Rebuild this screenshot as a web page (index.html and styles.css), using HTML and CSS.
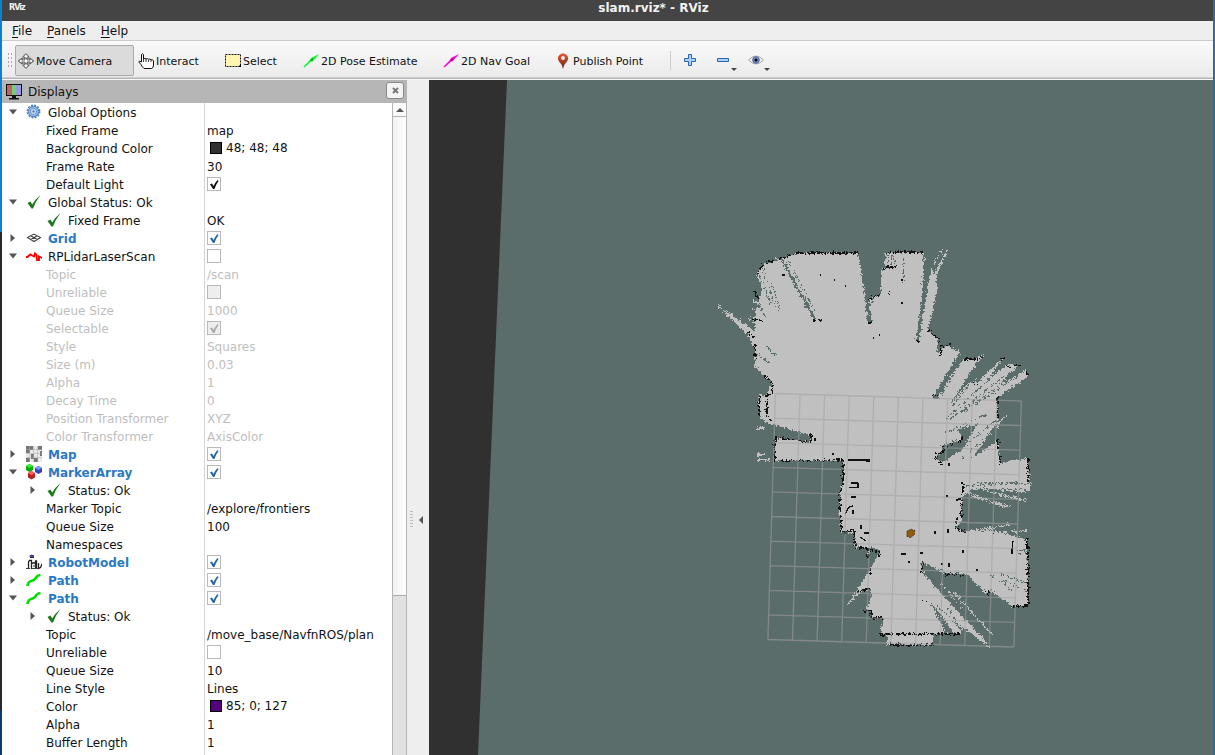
FILE: index.html
```
<!DOCTYPE html>
<html lang="en">
<head>
<meta charset="utf-8">
<title>slam.rviz* - RViz</title>
<link rel="stylesheet" href="styles.css">
</head>
<body>
<svg class="defs" aria-hidden="true">
  <defs>
    <linearGradient id="pin" x1="0" y1="0" x2="0" y2="1"><stop offset="0" stop-color="#ee5a36"/><stop offset="1" stop-color="#5c2414"/></linearGradient>
    <filter id="rough" filterUnits="userSpaceOnUse" x="700" y="235" width="345" height="425" color-interpolation-filters="sRGB"><feTurbulence type="fractalNoise" baseFrequency=".45" numOctaves="2" seed="7"/><feDisplacementMap in="SourceGraphic" scale="6" xChannelSelector="R" yChannelSelector="G"/></filter>
    <symbol id="down" viewBox="0 0 8 5"><path d="M0 0h8L4 5z" fill="#555"/></symbol>
    <symbol id="right" viewBox="0 0 5 8"><path d="M0 0v8L4.500 4z" fill="#555"/></symbol>
    <symbol id="tick" viewBox="0 0 16 16"><path d="M1.500 9L4.500 7.500l1.700 3Q9 5.500 14.500 1 9.500 7.500 7 14.500H5.500z" fill="#1c7a1c"/></symbol>
    <symbol id="path" viewBox="0 0 16 16"><path d="M1.500 14C2 8 6 9.500 8.500 7.500 11 5.500 9.500 3.500 14.500 3" fill="none" stroke="#0d0" stroke-width="2.600"/></symbol>
    <symbol id="gear" viewBox="0 0 16 16"><circle cx="7.500" cy="7.500" r="5.300" fill="#8fb4de" stroke="#4a7ab8" stroke-width="1"/><circle cx="7.500" cy="7.500" r="6.200" fill="none" stroke="#4a7ab8" stroke-width="1.500" stroke-dasharray="1.900 1.340"/><circle cx="7.500" cy="7.500" r="3" fill="#b9d3ee" stroke="#4c7dbd" stroke-dasharray="1 1"/><circle cx="7.500" cy="7.500" r="1" fill="#3b6cab"/></symbol>
    <symbol id="grid" viewBox="0 0 16 16"><path d="M1.500 7.500L8 4l6.500 3.500L8 11.500zM4.700 5.800l6.500 3.700M11.300 5.800l-6.500 3.700" fill="none" stroke="#444" stroke-width="1.100"/></symbol>
    <symbol id="scan" viewBox="0 0 16 16"><path d="M0 9h1.500L3 7.500 4.500 6.500 6 7.500 8 8.500 9 5.500 10.500 7 11 12h2V8.500l3 1.500" fill="none" stroke="red" stroke-width="1.900"/></symbol>
    <symbol id="map" viewBox="0 0 16 16"><path d="M0 0h16v16H0z" fill="#e8e8e8"/><path d="M0 0h7v4H4v3H0zM12 0h4v4h-4zM5 8h3v4h4v4H8v-3H5zM0 12h4v4H0zM14 5h2v5h-2z" fill="#777"/><path d="M3.500 0v16M7.500 0v16M11.500 0v16M0 3.500h16M0 7.500h16M0 11.500h16" stroke="#aaa" stroke-width=".5"/></symbol>
    <symbol id="markers" viewBox="0 0 16 16"><path d="M0 2l3.500-2L7 2v4L3.500 8 0 6z" fill="#0a0"/><path d="M0 2l3.500-2L7 2 3.500 4z" fill="#3e3"/><path d="M9 4l3.500-2L16 4v4l-3.500 2L9 8z" fill="#34b"/><path d="M9 4l3.500-2L16 4l-3.500 2z" fill="#79f"/><path d="M2 9l3.500-2L9 9v4.500L5.500 15.500 2 13.500z" fill="#b22"/><path d="M2 9l3.500-2L9 9l-3.500 2z" fill="#f66"/></symbol>
    <symbol id="robot" viewBox="0 0 16 16"><path d="M3.500 1.500Q5.500 0 8 1.500V4H4z" fill="#223"/><path d="M4 2.300h3.500" stroke="#56f"/><path d="M2.500 15V8l1-1.500h2V15M6 9h3M9.500 15V7l1 0v8M12.500 9v5.500l2-1L16 10" fill="none" stroke="#222" stroke-width="1.300"/><path d="M0 14.500h4M7 12h3M6 14.500h6" stroke="#444"/></symbol>
    <symbol id="check" viewBox="0 0 13 13"><path d="M2 6.300L4 5.500 5.500 8q1.700-3.500 4-6L10.500 3Q8 6.500 6.500 11H5z" fill="currentColor"/></symbol>
  </defs>
</svg>
<div class="screen">
  <div class="edge"></div>
  <div class="window">
    <header class="titlebar">
      <span class="logo">RViz</span>
      <span class="title">slam.rviz* - RViz</span>
    </header>
    <nav class="menu"><span><u>F</u>ile</span><span><u>P</u>anels</span><span><u>H</u>elp</span></nav>
    <div class="toolbar">
      <i class="grip"></i>
      <button class="tool camera active"><svg viewBox="0 0 16 16"><path d="M8 .5L5 4h2v3H4V5L.5 8 4 11V9h3v3H5l3 3.500 3-3.500H9V9h3v2l3.500-3L12 5v2H9V4h2z" fill="#fff" stroke="#333" stroke-width=".7"/><ellipse cx="8" cy="8" rx="7.400" ry="2.600" fill="none" stroke="#666" stroke-width=".8"/><ellipse cx="8" cy="8" rx="4" ry="6.500" fill="none" stroke="#777" stroke-width=".7"/></svg>Move Camera</button>
      <button class="tool interact"><svg viewBox="0 0 16 16"><path d="M3.500 9V1.500Q4.500 0 5.500 1.500V6q1.500-1.300 2.500 0 1.500-1 2.500.3 1.500-.8 2.500.5 2-.5 2.500 1V12q0 3-2 3.500H6Q4 14 3 11.500L.8 9Q1 7 3.500 9z" fill="#fff" stroke="#111"/><path d="M5.500 6v3M8 6v3M10.500 7v2M13 7v2" stroke="#111" stroke-width=".8"/></svg>Interact</button>
      <button class="tool select"><svg viewBox="0 0 16 16"><path d="M.5 1.500h15v12H.5z" fill="#fff5b0" stroke="#111" stroke-dasharray="2 1"/><path d="M16 11v3h-3z"/></svg>Select</button>
      <button class="tool pose"><svg viewBox="0 0 16 16"><path d="M.5 13.500L7 7l1-2 8-4-6 7-2 .5-6.500 6z" fill="#0f2"/><path d="M6.500 7.500l4-3-1 4z" fill="#0a2"/></svg>2D Pose Estimate</button>
      <button class="tool goal"><svg viewBox="0 0 16 16"><path d="M.5 13.500L7 7l1-2 8-4-6 7-2 .5-6.500 6z" fill="#f0d"/><path d="M6.500 7.500l4-3-1 4z" fill="#a08"/></svg>2D Nav Goal</button>
      <button class="tool publish"><svg viewBox="0 0 16 16"><path d="M8 16Q7 11 4 8.500A5 5 0 1 1 12 8.500Q9 11 8 16z" fill="url(#pin)"/><circle cx="8" cy="5" r="1.900" fill="#eee"/></svg>Publish Point</button>
      <i class="divider"></i>
      <svg class="act plus" viewBox="0 0 12 12"><path d="M4.500.5h3v4h4v3h-4v4h-3v-4h-4v-3h4z" fill="#acd0f3" stroke="#2b66b1"/></svg>
      <svg class="act minus" viewBox="0 0 20 16"><path d="M.5 4.500h11v3H.5z" fill="#acd0f3" stroke="#2b66b1"/><path d="M14 14h6l-3 3z" fill="#444"/></svg>
      <svg class="act eye" viewBox="0 0 22 16"><path d="M.5 6Q8-2 15.500 6 8 14 .5 6z" fill="#eee" stroke="#aaa"/><circle cx="8" cy="6" r="3.300" fill="#7c91cb" stroke="#5266a0"/><circle cx="8" cy="6" r="1.600"/><path d="M16 14h6l-3 3z" fill="#444"/></svg>
    </div>
    <main class="main">
      <section class="displays">
        <h2 class="dock"><svg viewBox="0 0 16 16"><path d="M0 0h16v12H0z" fill="#111"/><path d="M1 1h5v10H1z" fill="#b66"/><path d="M6 1h4v10H6z" fill="#7c7"/><path d="M10 1h5v10h-5z" fill="#99d"/><path d="M6 12h4v2h3v1.500H3V14h3z" fill="#111"/></svg><span>Displays</span><b class="close"><svg viewBox="0 0 7 7"><path d="M1 1l5 5M6 1L1 6" stroke="#777" stroke-width="2"/></svg></b></h2>
        <div class="body">
          <div class="tree">
            <div class="row top"><div class="name"><svg class="tw"><use href="#down"/></svg><svg class="ic"><use href="#gear"/></svg>Global Options</div><div class="val"></div></div>
            <div class="row prop"><div class="name">Fixed Frame</div><div class="val">map</div></div>
            <div class="row prop"><div class="name">Background Color</div><div class="val color"><i class="swatch dark"></i>48; 48; 48</div></div>
            <div class="row prop"><div class="name">Frame Rate</div><div class="val">30</div></div>
            <div class="row prop"><div class="name">Default Light</div><div class="val"><i class="box black"><svg><use href="#check"/></svg></i></div></div>
            <div class="row top"><div class="name"><svg class="tw"><use href="#down"/></svg><svg class="ic"><use href="#tick"/></svg>Global Status: Ok</div><div class="val"></div></div>
            <div class="row sub"><div class="name"><svg class="tw"></svg><svg class="ic"><use href="#tick"/></svg>Fixed Frame</div><div class="val">OK</div></div>
            <div class="row top on"><div class="name"><svg class="tw"><use href="#right"/></svg><svg class="ic"><use href="#grid"/></svg>Grid</div><div class="val"><i class="box"><svg><use href="#check"/></svg></i></div></div>
            <div class="row top"><div class="name"><svg class="tw"><use href="#down"/></svg><svg class="ic"><use href="#scan"/></svg>RPLidarLaserScan</div><div class="val"><i class="box"></i></div></div>
            <div class="row prop off"><div class="name">Topic</div><div class="val">/scan</div></div>
            <div class="row prop off"><div class="name">Unreliable</div><div class="val"><i class="box"></i></div></div>
            <div class="row prop off"><div class="name">Queue Size</div><div class="val">1000</div></div>
            <div class="row prop off"><div class="name">Selectable</div><div class="val"><i class="box"><svg><use href="#check"/></svg></i></div></div>
            <div class="row prop off"><div class="name">Style</div><div class="val">Squares</div></div>
            <div class="row prop off"><div class="name">Size (m)</div><div class="val">0.03</div></div>
            <div class="row prop off"><div class="name">Alpha</div><div class="val">1</div></div>
            <div class="row prop off"><div class="name">Decay Time</div><div class="val">0</div></div>
            <div class="row prop off"><div class="name">Position Transformer</div><div class="val">XYZ</div></div>
            <div class="row prop off"><div class="name">Color Transformer</div><div class="val">AxisColor</div></div>
            <div class="row top on"><div class="name"><svg class="tw"><use href="#right"/></svg><svg class="ic"><use href="#map"/></svg>Map</div><div class="val"><i class="box"><svg><use href="#check"/></svg></i></div></div>
            <div class="row top on"><div class="name"><svg class="tw"><use href="#down"/></svg><svg class="ic"><use href="#markers"/></svg>MarkerArray</div><div class="val"><i class="box"><svg><use href="#check"/></svg></i></div></div>
            <div class="row sub"><div class="name"><svg class="tw"><use href="#right"/></svg><svg class="ic"><use href="#tick"/></svg>Status: Ok</div><div class="val"></div></div>
            <div class="row prop"><div class="name">Marker Topic</div><div class="val">/explore/frontiers</div></div>
            <div class="row prop"><div class="name">Queue Size</div><div class="val">100</div></div>
            <div class="row prop"><div class="name">Namespaces</div><div class="val"></div></div>
            <div class="row top on"><div class="name"><svg class="tw"><use href="#right"/></svg><svg class="ic"><use href="#robot"/></svg>RobotModel</div><div class="val"><i class="box"><svg><use href="#check"/></svg></i></div></div>
            <div class="row top on"><div class="name"><svg class="tw"><use href="#right"/></svg><svg class="ic"><use href="#path"/></svg>Path</div><div class="val"><i class="box"><svg><use href="#check"/></svg></i></div></div>
            <div class="row top on"><div class="name"><svg class="tw"><use href="#down"/></svg><svg class="ic"><use href="#path"/></svg>Path</div><div class="val"><i class="box"><svg><use href="#check"/></svg></i></div></div>
            <div class="row sub"><div class="name"><svg class="tw"><use href="#right"/></svg><svg class="ic"><use href="#tick"/></svg>Status: Ok</div><div class="val"></div></div>
            <div class="row prop"><div class="name">Topic</div><div class="val">/move_base/NavfnROS/plan</div></div>
            <div class="row prop"><div class="name">Unreliable</div><div class="val"><i class="box"></i></div></div>
            <div class="row prop"><div class="name">Queue Size</div><div class="val">10</div></div>
            <div class="row prop"><div class="name">Line Style</div><div class="val">Lines</div></div>
            <div class="row prop"><div class="name">Color</div><div class="val color"><i class="swatch purple"></i>85; 0; 127</div></div>
            <div class="row prop"><div class="name">Alpha</div><div class="val">1</div></div>
            <div class="row prop"><div class="name">Buffer Length</div><div class="val">1</div></div>
            <div class="row prop"><div class="name"></div><div class="val"></div></div>
          </div>
          <div class="scroll"><div class="up"><svg viewBox="0 0 8 4"><path d="M0 4h8L4 0z" fill="#555"/></svg></div><div class="thumb"></div></div>
        </div>
      </section>
      <div class="splitter"><i class="dots"></i><svg viewBox="0 0 4 8"><path d="M4 0v8L0 4z" fill="#555"/></svg></div>
      <svg class="view" viewBox="429 80 784 675" shape-rendering="crispEdges">
        <path d="M507 80H1213V755H478z" fill="#5b6d6a" shape-rendering="auto"/>
        <g filter="url(#rough)">
          <!-- free space -->
          <path fill="#c0c0c0" d="M763 264L777 261 797 253H858L863 283 868 323H872L868 300 881 295V270L885 267 886 253H925L923 290 918 327 916 342H919L922 323 928 287 932 267 938 287 928 330 938 340 937 353 947 345 960 352 933 397 936 400 962 359 977 358 983 355 970 373 949 406 968 383 977 383 1003 358 989 377 1010 364 1018 365 1000 384 1027 371V377L997 398 998 420 973 458 998 440 1000 463 1028 458 1030 480V491L970 490 962 497V520L957 527 965 532 992 530 1027 540 1028 587V607H1013L990 590 987 595 965 573H945L923 562 950 593 990 648 963 627 960 634H933V645H887V634H880L884 618H872V610H866L871 598V590L860 592 847 605 870 570 880 550 870 547 868 557 866 547H856L855 533H841L839 510 840 493 842 483 843 460H810L775 461V438L810 442V435L767 423 760 417 759 395H767L772 382 765 377 755 367V350L748 335 713 302 755 331V320L757 305 762 290 757 273z"/>
          <!-- unexplored pockets -->
          <path fill="#5b6d6a" d="M780 259l3 0 32 58 3 5-4-2zM753 334l25 23-3-1zM753 350l19 14-4-1zM958 430l20-7-16 27-19 12-8-4 7-6V445l20-5zM921 562l4 1 66 83-25-25-42-47zM942 576h23l22 19 2 36zM931 602l24 32-10-1z"/>
          <!-- laser streaks -->
          <path class="ray" d="M752 299l10 9M751 307l11 10M749 318l12 9M758 275l12-4M776 257l8 10M933 265l9-14M935 275l12-25M932 287l13-33M757 428h8M757 455h7M758 460h12M958 391l12-19M965 396l12-18M974 394l34-29M980 394l39-29M990 392l36-22M1003 391l24-14M970 402l33-31M971 444l38-30M974 451l28-29M970 486l56 6M967 492l40 16M970 496l40 10M965 479h58M975 488l52 13M965 532l43-7M1003 532l24-1M984 573l29 30M971 562l56 24M953 591l39 44M940 597l48 50"/>
          <path class="pocket" d="M863 254l8 65M866 254l7 50M887 255v14M891 255v11M894 255v12M903 258v25M924 254l-2 50M922 300l-5 38M759 275l12 30M763 269l14 42M754 293l11 24M757 304l9 13M784 262l22 41M788 260l27 51M772 284l8 26M959 361l-22 34M962 360l-24 40M983 360l-23 32M984 364l-31 42M998 371l-52 48M1005 375l-55 45M1013 377l-51 35M1018 376l-43 29M987 414l-42 19M997 419l-43 36M997 428l-38 33M965 486l65-3M977 482h46M975 489l54 0M923 562l27 36M925 568l33 37M936 605l30 28M931 603l20 31M947 606l15 27M1000 575l28 8M1003 580l25 12M990 575l23 16M1017 550h12M1018 553h11"/>
          <!-- detected walls -->
          <path class="wall" d="M763 264l14-4 20-7h61M797 252.500h61M757 273l6-9M882 270l3-3h13M887 253l10-1h27M868 300l5-3 8-3 9-1M867 323h5M916 341h4M813 320h9M928 329l3 5 8 5v4M936 351l4 4 2-8 8-3 1 3M964 359h14l5-3M1001 359l4-1M1007 366l5 2M1014 366l6-1M1027 371v5M974 382l4 4M932 397l5-3M997 397l1 22M754 290l4 9M752 319l13 2M748 332l7 6M755 345v12M764 376l8 6v12l-5 1v20l5 7M759 396v20M775 438v23M775 438l36 4V433M780 461l63-1v25l-3 8v16l2 23h6l6-3v6l2 13h10l14 4v4M868 548v10M870 567v8M858 592l12-4M863 611h8v7h13M880 634h80M883 634v3M890 645h43M942 452l8-7 12-5v-4M943 446l1 6-8 2v6l6 4M998 440v10M1000 456v8M1028 458v24M963 481v10l-3 8 2 12v8M962 510l-6 12v6l9 4M992 532l4 4M1027 538v8M1028 546v60h-15M923 562l-2 13M943 576l5-2 12 1 4 3M988 590v6M923 600l4 2"/>
        </g>
        <path d="M848 460h22M866 461h4M851 483h7M849 487.500h8M858 483v5M851 497h5M845 514l4-7 4-1M853 510v4M861 525v4M864 533h5M860 537l6 4M901 554h5M909 561v1.500M920 553h3M935 531v3M948 529v4M941 564h2M949 563v4M963 550v3M977 569v2M1012 554v-5l1-8M833 453v2M815 438v3M949 463v3M947 495v2M956 500h2M901 280h2M901 303h2M873 338h1M879 335h1M785 275h-3M820 275h1M834 280h1M845 286h1" fill="none" stroke="#111" stroke-width="1.300"/>
        <path class="cells" transform="matrix(24.6 .75 -.75 24.6 775.4 393.5)" d="M0 0H10M0 1H10M0 2H10M0 3H10M0 4H10M0 5H10M0 6H10M0 7H10M0 8H10M0 9H10M0 10H10M0 0V10M1 0V10M2 0V10M3 0V10M4 0V10M5 0V10M6 0V10M7 0V10M8 0V10M9 0V10M10 0V10"/>
        <path d="M907 531l5-2 1 2 2-1-1 3 1 1-5 4-1-2-2 1z" fill="#955a0c" stroke="#432603" stroke-width=".6" shape-rendering="auto"/>
      </svg>
    </main>
  </div>
  <div class="edge right"></div>
</div>
</body>
</html>
```
FILE: styles.css
```
* { box-sizing: border-box; }
body { margin: 0; font: 12px "DejaVu Sans", sans-serif; color: #111; overflow: hidden; }
.defs { position: absolute; width: 0; height: 0; }
.screen { display: flex; width: 1215px; height: 755px; background: #eee; }
.edge { flex: none; width: 2px; background: linear-gradient(#0a82d0 0 232px, #25282d 232px 710px, #0a3a70 710px); }
.edge.right { background: #2f6f8c; }
.window { flex: 1; min-width: 0; display: flex; flex-direction: column; }
.titlebar { height: 21px; flex: none; background: #444; color: #f3f3f3; display: flex; }
.logo { width: 30px; padding: 2px 0 0 7px; font: bold 8px/12px "DejaVu Sans", sans-serif; letter-spacing: -1px; }
.title { flex: 1; text-align: center; font-weight: bold; line-height: 17px; padding-left: 62px; }
.menu { height: 20px; flex: none; border-bottom: 1px solid #ccc; padding-left: 10px; display: flex; gap: 15px; line-height: 20px; }
.menu u { text-underline-offset: 2px; }
.toolbar { height: 39px; flex: none; display: flex; align-items: center; padding-left: 5px; background: linear-gradient(#fafafa, #ebebeb 36px, #b5b5b5 37px 38px, #f8f8f8 38px); }
.grip { width: 5px; height: 17px; margin-right: 3px; background: radial-gradient(circle, #aaa 0 .7px, transparent 1px) 0 0 / 3px 4px; }
.tool { height: 31px; padding: 2px 0 0 3px; border: 1px solid transparent; border-radius: 2px; background: none; font: 11px "DejaVu Sans", sans-serif; color: #111; display: flex; align-items: center; gap: 1px; text-align: left; white-space: nowrap; flex: none; }
.tool svg { width: 16px; height: 16px; flex: none; margin-bottom: 2px; }
.tool.active { background: #dbdbdb; border-color: #aaa; }
.camera { width: 119px; padding-left: 2px; gap: 2px; }
.interact { width: 87px; gap: 2px; }
.select { width: 78px; gap: 2px; }
.pose { width: 140px; gap: 2px; }
.goal { width: 112px; gap: 2px; }
.publish { width: 119px; gap: 2px; }
.divider { width: 1px; height: 19px; background: #ccc; }
.act { overflow: visible; flex: none; }
.plus { width: 12px; height: 12px; margin: -2px 0 0 13px; }
.minus { width: 20px; height: 16px; margin: 3px 0 0 21px; }
.eye { width: 22px; height: 16px; margin: 3px 0 0 11px; }
.main { flex: 1; min-height: 0; display: flex; }
.displays { width: 405px; flex: none; display: flex; flex-direction: column; }
.dock { margin: 0; height: 23px; flex: none; background: #b6b6b6; display: flex; align-items: center; gap: 6px; padding: 0 3px 0 4px; font-size: 12px; font-weight: normal; }
.dock svg { width: 16px; height: 16px; }
.dock span { flex: 1; }
.close { width: 18px; height: 17px; margin-bottom: 2px; border: 1px solid #888; border-radius: 3px; background: #f4f4f4; display: grid; place-items: center; }
.close svg { width: 7px; height: 7px; }
.body { flex: 1; min-height: 0; display: flex; }
.tree { flex: 1; background: #fff; overflow: hidden; }
.row { display: flex; height: 18px; line-height: 16px; white-space: nowrap; }
.name { width: 203px; flex: none; padding-top: 2px; display: flex; align-items: center; border-right: 1px solid #d6d6d6; }
.prop .name { padding-left: 44px; }
.top .name { padding-left: 7px; }
.sub .name { padding-left: 27px; }
.tw { width: 8px; height: 8px; margin: 0 9px 2px 0; flex: none; }
.ic { width: 16px; height: 16px; margin: 0 6px 2px 0; flex: none; }
.val { padding: 2px 0 0 2px; display: flex; align-items: center; }
.val.color { padding-top: 0; }
.on .name { color: #2a79c4; font-weight: bold; }
.off { color: #bebebe; }
.box { width: 14px; height: 14px; margin-bottom: 2px; border: 1px solid #b9b9b9; background: #fff; color: #2467a9; display: block; }
.box svg { width: 13px; height: 13px; display: block; }
.box.black { color: #111; }
.off .box { background: #eee; color: #aaa; }
.swatch { width: 12px; height: 12px; margin: 0 4px 0 3px; border: 1px solid #000; }
.dark { background: #303030; }
.purple { background: #55007f; }
.scroll { width: 15px; flex: none; border: solid #b5b5b5; border-width: 0 1px; background: #e1e1e1; }
.up { height: 14px; border-bottom: 1px solid #b5b5b5; background: #fafafa; display: grid; place-items: center; }
.up svg { width: 8px; height: 4px; }
.thumb { height: 479px; border-bottom: 1px solid #aaa; background: linear-gradient(90deg, #f2f2f2, #fff); }
.splitter { width: 22px; flex: none; display: flex; align-items: center; padding: 204px 0 0 3px; gap: 6px; }
.dots { width: 3px; height: 18px; background: repeating-linear-gradient(#bbb 0 1px, transparent 1px 3px); }
.splitter svg { width: 4px; height: 8px; }
.view { flex: 1; width: 784px; height: 675px; background: #303030; display: block; }
.ray { fill: none; stroke: #c0c0c0; stroke-width: 1.3; }
.pocket { fill: none; stroke: #5b6d6a; stroke-width: 1; stroke-dasharray: 5 1 3 2; }
.wall { fill: none; stroke: #111; stroke-width: 1.3; stroke-dasharray: 4 1 7 1 2 2; }
.cells { fill: none; stroke: rgba(160, 160, 164, .55); stroke-width: 1.3; vector-effect: non-scaling-stroke; shape-rendering: auto; }
```
